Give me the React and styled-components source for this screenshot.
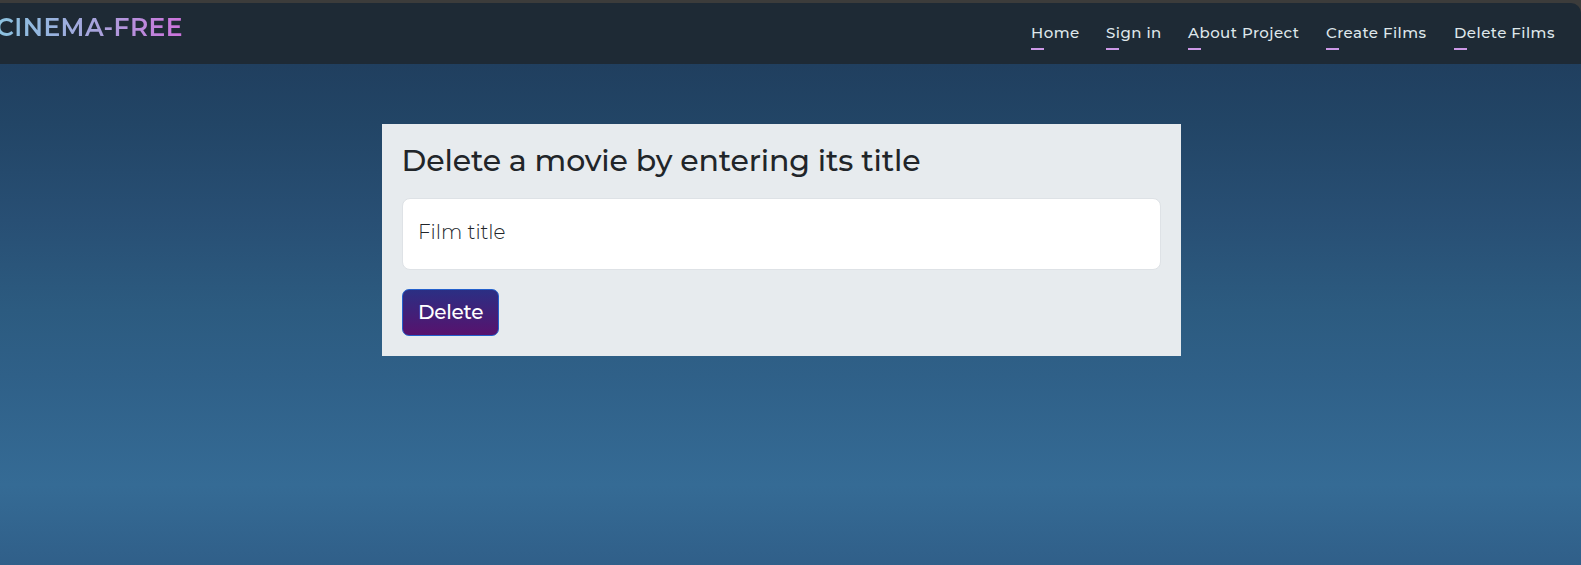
import React from "react";
import styled, { createGlobalStyle } from "styled-components";

const GlobalStyle = createGlobalStyle`
  *, *::before, *::after { box-sizing: border-box; }
  body { margin: 0; font-family: Montserrat, Inter, "Open Sans", sans-serif; color: #212529; }
`;

const Page = styled.div`
  height: 565px;
  overflow: hidden;
  display: flex;
  flex-direction: column;
  background: linear-gradient(180deg, #1f3b59 0, #203f5f 64px, #224566 124px, #284f74 220px, #2c5b80 310px, #2f6088 375px, #356b95 485px, #305f89 565px);
`;

const WindowEdge = styled.div`
  height: 64px;
  flex: none;
  padding-top: 3px;
  background: #3c3c3b;
`;

const Header = styled.header`
  height: 61px;
  display: flex;
  justify-content: space-between;
  background: #1e2a35;
  border-top-right-radius: 10px;
  padding-right: 26px;
`;

const Logo = styled.a`
  margin: 8px 0 0 -4px;
  height: 32px;
  font-size: 25px;
  line-height: 32px;
  font-weight: 600;
  letter-spacing: 0.42px;
  white-space: nowrap;
  color: transparent;
  background: linear-gradient(90deg, #8cc3e0 0%, #94b6df 25%, #a9a2dc 55%, #cd72dc 100%);
  background-clip: text;
  -webkit-background-clip: text;
`;

const Nav = styled.nav`
  display: flex;
  gap: 27px;
  padding-top: 18px;
`;

const NavLink = styled.a`
  width: ${(p) => p.$width}px;
  height: 29px;
  font-size: 15px;
  font-weight: 500;
  line-height: 24px;
  letter-spacing: 0.46px;
  white-space: nowrap;
  color: #dfe7eb;
  display: flex;
  flex-direction: column;
  justify-content: space-between;

  &::after {
    content: "";
    width: 12.5px;
    height: 2px;
    background: #cc98e6;
  }
`;

const Card = styled.form`
  width: 799px;
  height: 232px;
  margin: 60px 0 0 382px;
  padding: 20px;
  display: flex;
  flex-direction: column;
  align-items: flex-start;
  background: #e7ebee;
`;

const Title = styled.h1`
  margin: -1px 0 19px -0.5px;
  font-size: 30px;
  line-height: 36px;
  font-weight: 500;
  letter-spacing: -0.12px;
  white-space: nowrap;
`;

const Field = styled.input`
  width: 759px;
  height: 72px;
  margin-bottom: 19px;
  padding: 0 15px 4px;
  border: 1px solid #dee2e6;
  border-radius: 8px;
  background: #fff;
  font: 300 20px Montserrat, Inter, sans-serif;
  outline: none;

  &::placeholder { color: #212529; opacity: 1; }
`;

const SubmitButton = styled.button`
  width: 97px;
  height: 47px;
  padding: 0 0 1px 15px;
  text-align: left;
  border: 1px solid #2460cc;
  border-radius: 7px;
  background: linear-gradient(180deg, #2b2f84, #57126d);
  color: #fff;
  font: 500 20px Montserrat, Inter, sans-serif;
  letter-spacing: -0.25px;
`;

const links = [
  { label: "Home", width: 48 },
  { label: "Sign in", width: 55 },
  { label: "About Project", width: 111 },
  { label: "Create Films", width: 101 },
  { label: "Delete Films", width: 101 },
];

export default function App() {
  return (
    <Page>
      <GlobalStyle />
      <WindowEdge>
        <Header>
          <Logo>CINEMA-FREE</Logo>
          <Nav>
            {links.map((l) => (
              <NavLink key={l.label} $width={l.width}>
                {l.label}
              </NavLink>
            ))}
          </Nav>
        </Header>
      </WindowEdge>
      <Card>
        <Title>Delete a movie by entering its title</Title>
        <Field placeholder="Film title" />
        <SubmitButton type="button">Delete</SubmitButton>
      </Card>
    </Page>
  );
}
